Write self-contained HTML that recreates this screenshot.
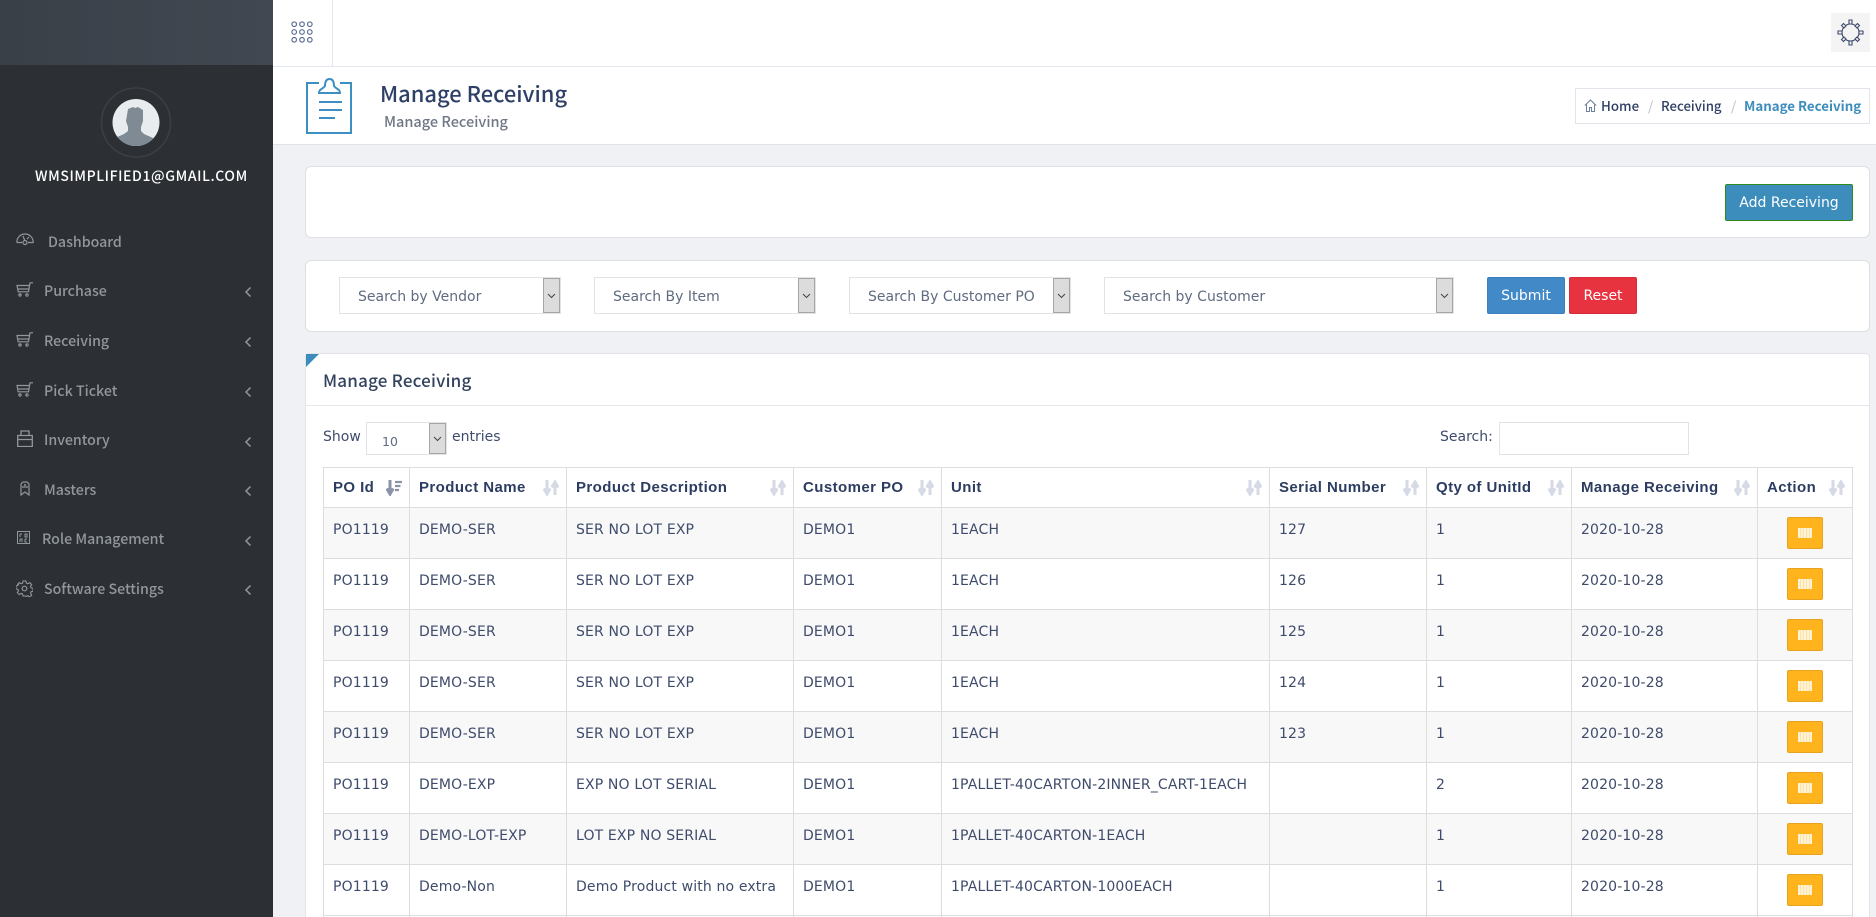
<!DOCTYPE html>
<html lang="en"><head><meta charset="utf-8"><title>Manage Receiving</title>
<style>
*{box-sizing:border-box}
html,body{margin:0;padding:0;width:1876px;height:917px;overflow:hidden;background:#f0f1f5}
body{font-family:"DejaVu Sans","Liberation Sans",sans-serif;font-size:14px;color:#3e4b6b}
#w{position:relative;width:1876px;height:917px;overflow:hidden}
.a{position:absolute}
.t{position:absolute;white-space:nowrap}
.n{font-family:"Noto Sans CJK JP","Liberation Sans",sans-serif}
.side{left:0;top:0;width:273px;height:917px;background:#2c3035}
.sidetop{left:0;top:0;width:273px;height:65px;background:linear-gradient(90deg,#3a4048,#424851)}
.m{left:44px;color:#92979c;font-size:14.2px;line-height:22px;font-weight:500;font-family:"Noto Sans CJK JP","Liberation Sans",sans-serif;margin-top:1px}
.card{background:#fff;border:1px solid #dedfe3;border-radius:6px;left:305px;width:1565px}
.sel{background:#fff;border:1px solid #e2e3e7;height:37px;top:277px}
.ar{position:absolute;right:0;top:0;width:17px;height:100%;background:#dcdcdc;border:1px solid #a6a6a6}
.ar svg{position:absolute;left:2px;top:50%;margin-top:-6px}
.ph{position:absolute;top:1px;line-height:37px;color:#5f6b80;white-space:nowrap}
table{position:absolute;left:323px;top:467px;width:1530px;border-collapse:collapse;table-layout:fixed}
th,td{border:1px solid #ddd;padding:0 0 0 9px;text-align:left;vertical-align:top;white-space:nowrap;overflow:hidden}
th{height:39px;font:bold 15px/39px "Liberation Sans",sans-serif;letter-spacing:.42px;color:#2d3d62;position:relative;background:#fff}
td{height:51px;line-height:20px;padding-top:12px;color:#3e4b6b;background:#fff;letter-spacing:.15px}
tr.o td{background:#f8f8f9}
tr.e td{height:4px;padding:0;line-height:0}
th svg{position:absolute;right:7px;top:12px}
td.c{padding:9px 0 0;text-align:center}
.b{display:inline-block;width:36px;height:32px;background:#ffb41e;border:1px solid #e6a31f;border-radius:2px;position:relative;vertical-align:top}
.b i{position:absolute;left:10px;top:10px;width:14px;height:10px;background:repeating-linear-gradient(90deg,#fff3d6 0 2px,#ffe2a8 2px 3px)}
</style></head><body><div id="w">
<svg width="0" height="0" style="position:absolute"><defs>
<symbol id="sort" viewBox="0 0 16 16"><path d="M4 0v12M.8 8.500 4 14l3.200-5.500M12 15V3M8.800 7.500 12 2l3.200 5.500" fill="none" stroke="#d5dae6" stroke-width="3"/></symbol>
<symbol id="cart" viewBox="0 0 18 15"><path d="M17 .8h-3l-1.500 9H2.200L1 3.500h12.500M2 7h11M3.500 12.600h1M10 12.600h1" fill="none" stroke="#92979c" stroke-width="1.200"/><circle cx="4" cy="13" r="1.200" fill="none" stroke="#92979c"/><circle cx="11" cy="13" r="1.200" fill="none" stroke="#92979c"/></symbol>
<symbol id="chev" viewBox="0 0 8 12"><path d="M6.500 1.500 2 6l4.500 4.500" fill="none" stroke="#92979c" stroke-width="1.500"/></symbol>
</defs></svg>

<div class="a side"></div><div class="a sidetop"></div>
<svg class="a" style="left:100px;top:87px" width="72" height="72" viewBox="0 0 72 72"><circle cx="36" cy="35.500" r="34.500" fill="none" stroke="#3b3f44" stroke-width="1.600"/><clipPath id="av"><circle cx="36" cy="35.500" r="23.500"/></clipPath><circle cx="36" cy="35.500" r="23.500" fill="#e9ecef"/><path clip-path="url(#av)" d="M28 22l5-2 2 1 3-1 5 3v11l-2 6v4l3 3 9 4 3 8H12l3-8 9-4 4-3v-4l-2-6z" fill="#7f8a94"/></svg>
<div class="t" style="left:35px;top:165px;line-height:22px;font-size:14px;font-weight:500;color:#fff;letter-spacing:.6px;font-family:'Noto Sans CJK JP','Liberation Sans',sans-serif">WMSIMPLIFIED1@GMAIL.COM</div>

<svg class="a" style="left:16px;top:233px" width="18" height="13" viewBox="0 0 18 13"><path d="M.8 9.500C.8 4.500 4.500 1 9 1s8.200 3.500 8.200 8.500H12M6 9.500H.8M7 3l2 5M13 4l-2 2" fill="none" stroke="#92979c" stroke-width="1.200"/><circle cx="9" cy="9.500" r="2" fill="none" stroke="#92979c" stroke-width="1.200"/></svg>
<div class="t m" style="left:48px;top:230px">Dashboard</div>
<svg class="a" style="left:16px;top:282px" width="18" height="15"><use href="#cart"/></svg><div class="t m" style="top:279px">Purchase</div>
<svg class="a" style="left:16px;top:332px" width="18" height="15"><use href="#cart"/></svg><div class="t m" style="top:329px">Receiving</div>
<svg class="a" style="left:16px;top:382px" width="18" height="15"><use href="#cart"/></svg><div class="t m" style="top:379px">Pick Ticket</div>
<svg class="a" style="left:17px;top:430px" width="16" height="17" viewBox="0 0 16 17"><path d="M.7 5.500h14.600v11H.7zM.7 9.500h14.600M4 5.500V1h8v4.500" fill="none" stroke="#92979c" stroke-width="1.300"/></svg><div class="t m" style="top:428px">Inventory</div>
<svg class="a" style="left:20px;top:481px" width="10" height="15" viewBox="0 0 10 15"><path d="M1 14V3l2-2h4l2 2v11L5 11zM2 6h6" fill="none" stroke="#92979c" stroke-width="1.200"/><circle cx="5" cy="4" r="1" fill="#92979c"/></svg><div class="t m" style="top:478px">Masters</div>
<svg class="a" style="left:17px;top:531px" width="13" height="13" viewBox="0 0 13 13"><rect x=".5" y=".5" width="12" height="12" fill="none" stroke="#92979c"/><path d="M3 3h2M3 3v3M8 3h2v3H8zM3 8h2v3M3 8v3M8 8h2M8 8v3h2" fill="none" stroke="#92979c"/></svg><div class="t m" style="left:42px;top:527px">Role Management</div>
<svg class="a" style="left:16px;top:580px" width="17" height="17" viewBox="0 0 17 17"><circle cx="8.500" cy="8.500" r="2.300" fill="none" stroke="#92979c" stroke-width="1.200"/><path d="M7 1h3l.4 2.100 1.500.7 1.800-1.200 2 2-1.200 1.800.6 1.500 2 .4v3l-2 .4-.6 1.500 1.200 1.800-2 2-1.800-1.200-1.500.6L10 16H7l-.4-2-1.500-.6-1.800 1.200-2-2 1.200-1.800-.6-1.500-2-.4v-3l2-.4.6-1.500L1.300 4.600l2-2 1.800 1.200 1.500-.7z" fill="none" stroke="#92979c" stroke-width="1.100"/></svg><div class="t m" style="top:577px">Software Settings</div>
<svg class="a" style="left:244px;top:286px" width="8" height="12"><use href="#chev"/></svg>
<svg class="a" style="left:244px;top:336px" width="8" height="12"><use href="#chev"/></svg>
<svg class="a" style="left:244px;top:386px" width="8" height="12"><use href="#chev"/></svg>
<svg class="a" style="left:244px;top:436px" width="8" height="12"><use href="#chev"/></svg>
<svg class="a" style="left:244px;top:485px" width="8" height="12"><use href="#chev"/></svg>
<svg class="a" style="left:244px;top:535px" width="8" height="12"><use href="#chev"/></svg>
<svg class="a" style="left:244px;top:584px" width="8" height="12"><use href="#chev"/></svg>

<div class="a" style="left:273px;top:0;width:1603px;height:67px;background:#fff;border-bottom:1px solid #e2e7ef"></div>
<div class="a" style="left:332px;top:0;width:1px;height:66px;background:#e2e7ef"></div>
<svg class="a" style="left:290px;top:20px" width="24" height="24" viewBox="0 0 24 24" fill="none" stroke="#5a6b91" stroke-width="1.150"><circle cx="4.200" cy="4.200" r="2.300"/><circle cx="12" cy="4.200" r="2.300"/><circle cx="19.800" cy="4.200" r="2.300"/><circle cx="4.200" cy="12" r="2.300"/><circle cx="12" cy="12" r="2.300"/><circle cx="19.800" cy="12" r="2.300"/><circle cx="4.200" cy="19.800" r="2.300"/><circle cx="12" cy="19.800" r="2.300"/><circle cx="19.800" cy="19.800" r="2.300"/></svg>
<div class="a" style="left:1831px;top:13px;width:39px;height:39px;background:#f4f4f4"></div>
<svg class="a" style="left:1837px;top:19px" width="27" height="27" viewBox="0 0 27 27" fill="none" stroke="#3c4a6b" stroke-width="1.100"><circle cx="13.500" cy="13.500" r="8.500"/><path d="M12 1h3v4h-3zM12 22h3v4h-3zM1 12h4v3H1zM22 12h4v3h-4zM4.500 6.500l2-2 2.500 2.500-2 2zM18 7l2.500-2.500 2 2L20 9zM4.500 20.500l2 2L9 20l-2-2zM18 20l2.500 2.500 2-2L20 18z" fill="#f4f4f4"/></svg>

<div class="a" style="left:273px;top:67px;width:1603px;height:78px;background:#fff;border-bottom:1px solid #e2e3e9"></div>
<svg class="a" style="left:305px;top:77px" width="48" height="58" viewBox="0 0 48 58" fill="none" stroke="#3d8fc2" stroke-width="2"><path d="M14 6H2v50h44V6H35"/><path d="M14 16c0-4 4-4 6-7 0-4 1-7 4.500-7S29 5 29 9c2 3 6 3 6 7z" fill="#fff"/><path d="M14 25h23M14 33h23M14 41h16"/></svg>
<div class="t n" style="left:380px;top:78px;font-size:21.900px;line-height:32px;color:#2f4066;font-weight:500">Manage Receiving</div>
<div class="t n" style="left:384px;top:111px;font-size:14.500px;line-height:22px;color:#6f7785;font-weight:500">Manage Receiving</div>
<div class="a" style="left:1575px;top:88px;width:295px;height:36px;background:#fff;border:1px solid #e2e5ec"></div>
<svg class="a" style="left:1584px;top:99px" width="13" height="13" viewBox="0 0 13 13" fill="none" stroke="#6d7f9c"><path d="M.8 6.500 6.500 1l5.700 5.500M2.500 5.500v7h3v-4h2v4h3v-7"/></svg>
<div class="t n" style="left:1601px;top:95px;font-size:13.300px;line-height:22px;font-weight:500;color:#2f3f65">Home</div>
<div class="t n" style="left:1648px;top:95px;font-size:13.300px;line-height:22px;color:#b9bcc4">/</div>
<div class="t n" style="left:1661px;top:95px;font-size:13.200px;line-height:22px;font-weight:500;color:#2f3f65">Receiving</div>
<div class="t n" style="left:1731px;top:95px;font-size:13.300px;line-height:22px;color:#b9bcc4">/</div>
<div class="t n" style="left:1744px;top:95px;font-size:13.300px;line-height:22px;font-weight:700;color:#3d8dbc">Manage Receiving</div>

<div class="a card" style="top:166px;height:72px"></div>
<div class="a" style="left:1725px;top:184px;width:128px;height:37px;background:#3d8dbc;border:1px solid #2f8a1d;border-radius:2px;color:#fff;text-align:center;line-height:37px">Add Receiving</div>

<div class="a card" style="top:260px;height:72px"></div>
<div class="a sel" style="left:339px;width:222px"><span class="ph" style="left:18px">Search by Vendor</span><span class="ar"><svg width="11" height="11" viewBox="0 0 11 11"><path d="M2 4l3.500 3.500L9 4" fill="none" stroke="#444"/></svg></span></div>
<div class="a sel" style="left:594px;width:222px"><span class="ph" style="left:18px">Search By Item</span><span class="ar"><svg width="11" height="11" viewBox="0 0 11 11"><path d="M2 4l3.500 3.500L9 4" fill="none" stroke="#444"/></svg></span></div>
<div class="a sel" style="left:849px;width:222px"><span class="ph" style="left:18px">Search By Customer PO</span><span class="ar"><svg width="11" height="11" viewBox="0 0 11 11"><path d="M2 4l3.500 3.500L9 4" fill="none" stroke="#444"/></svg></span></div>
<div class="a sel" style="left:1104px;width:350px"><span class="ph" style="left:18px">Search by Customer</span><span class="ar"><svg width="11" height="11" viewBox="0 0 11 11"><path d="M2 4l3.500 3.500L9 4" fill="none" stroke="#444"/></svg></span></div>
<div class="a" style="left:1487px;top:277px;width:78px;height:37px;background:#4289c8;border:1px solid #3b80bc;border-radius:2px;color:#fff;text-align:center;line-height:37px">Submit</div>
<div class="a" style="left:1569px;top:277px;width:68px;height:37px;background:#e7323f;border:1px solid #d42c38;border-radius:2px;color:#fff;text-align:center;line-height:37px">Reset</div>

<div class="a" style="left:305px;top:353px;width:1565px;height:564px;background:#fff;border:1px solid #e3e4e8;border-bottom:0;border-radius:4px 4px 0 0"></div>
<div class="a" style="left:306px;top:354px;width:0;height:0;border-top:13px solid #3d8dbc;border-right:13px solid transparent"></div>
<div class="a" style="left:306px;top:405px;width:1563px;height:1px;background:#e5e6ea"></div>
<div class="t n" style="left:323px;top:367px;font-size:17px;line-height:26px;font-weight:500;color:#33435f;letter-spacing:.2px">Manage Receiving</div>

<div class="t" style="left:323px;top:427px;line-height:20px">Show</div>
<div class="a sel" style="left:366px;top:422px;width:81px;height:33px"><span class="ph" style="left:15px;top:2px;line-height:33px;font-size:12.500px">10</span><span class="ar"><svg width="11" height="11" viewBox="0 0 11 11"><path d="M2 4l3.500 3.500L9 4" fill="none" stroke="#444"/></svg></span></div>
<div class="t" style="left:452px;top:427px;line-height:20px">entries</div>
<div class="t" style="left:1440px;top:427px;line-height:20px">Search:</div>
<div class="a" style="left:1499px;top:422px;width:190px;height:33px;background:#fff;border:1px solid #e2e3e7"></div>

<table>
<colgroup><col style="width:86px"><col style="width:157px"><col style="width:227px"><col style="width:148px"><col style="width:328px"><col style="width:157px"><col style="width:145px"><col style="width:186px"><col style="width:95px"></colgroup>
<thead><tr>
<th>PO Id<svg width="16" height="16" viewBox="0 0 16 16"><path d="M4 0v12M.8 8.500 4 14l3.200-5.500" fill="none" stroke="#8a93a8" stroke-width="3"/><path d="M9 2h7M9 6h5.500M9 10h4" stroke="#8a93a8" stroke-width="2.200"/></svg></th>
<th>Product Name<svg width="16" height="16"><use href="#sort"/></svg></th>
<th>Product Description<svg width="16" height="16"><use href="#sort"/></svg></th>
<th>Customer PO<svg width="16" height="16"><use href="#sort"/></svg></th>
<th>Unit<svg width="16" height="16"><use href="#sort"/></svg></th>
<th>Serial Number<svg width="16" height="16"><use href="#sort"/></svg></th>
<th>Qty of UnitId<svg width="16" height="16"><use href="#sort"/></svg></th>
<th>Manage Receiving<svg width="16" height="16"><use href="#sort"/></svg></th>
<th>Action<svg width="16" height="16"><use href="#sort"/></svg></th>
</tr></thead>
<tbody>
<tr class="o"><td>PO1119</td><td>DEMO-SER</td><td>SER NO LOT EXP</td><td>DEMO1</td><td>1EACH</td><td>127</td><td>1</td><td>2020-10-28</td><td class="c"><span class="b"><i></i></span></td></tr>
<tr><td>PO1119</td><td>DEMO-SER</td><td>SER NO LOT EXP</td><td>DEMO1</td><td>1EACH</td><td>126</td><td>1</td><td>2020-10-28</td><td class="c"><span class="b"><i></i></span></td></tr>
<tr class="o"><td>PO1119</td><td>DEMO-SER</td><td>SER NO LOT EXP</td><td>DEMO1</td><td>1EACH</td><td>125</td><td>1</td><td>2020-10-28</td><td class="c"><span class="b"><i></i></span></td></tr>
<tr><td>PO1119</td><td>DEMO-SER</td><td>SER NO LOT EXP</td><td>DEMO1</td><td>1EACH</td><td>124</td><td>1</td><td>2020-10-28</td><td class="c"><span class="b"><i></i></span></td></tr>
<tr class="o"><td>PO1119</td><td>DEMO-SER</td><td>SER NO LOT EXP</td><td>DEMO1</td><td>1EACH</td><td>123</td><td>1</td><td>2020-10-28</td><td class="c"><span class="b"><i></i></span></td></tr>
<tr><td>PO1119</td><td>DEMO-EXP</td><td>EXP NO LOT SERIAL</td><td>DEMO1</td><td>1PALLET-40CARTON-2INNER_CART-1EACH</td><td></td><td>2</td><td>2020-10-28</td><td class="c"><span class="b"><i></i></span></td></tr>
<tr class="o"><td>PO1119</td><td>DEMO-LOT-EXP</td><td>LOT EXP NO SERIAL</td><td>DEMO1</td><td>1PALLET-40CARTON-1EACH</td><td></td><td>1</td><td>2020-10-28</td><td class="c"><span class="b"><i></i></span></td></tr>
<tr><td>PO1119</td><td>Demo-Non</td><td>Demo Product with no extra</td><td>DEMO1</td><td>1PALLET-40CARTON-1000EACH</td><td></td><td>1</td><td>2020-10-28</td><td class="c"><span class="b"><i></i></span></td></tr>
<tr class="e"><td></td><td></td><td></td><td></td><td></td><td></td><td></td><td></td><td></td></tr>
</tbody></table>
</div></body></html>
